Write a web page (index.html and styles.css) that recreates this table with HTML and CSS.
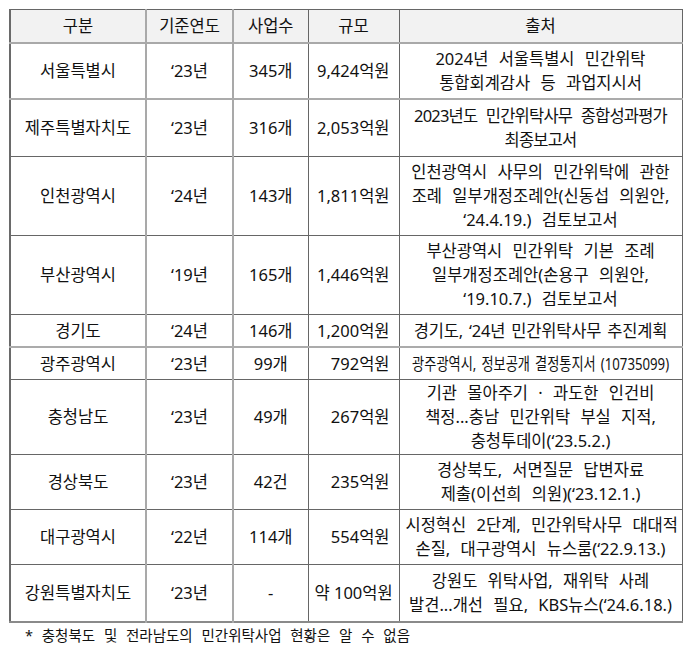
FILE: index.html
```html
<!DOCTYPE html>
<html lang="ko">
<head>
<meta charset="utf-8">
<title>지자체 민간위탁 현황</title>
<link rel="stylesheet" href="styles.css">
</head>
<body>
<div class="page">
  <table class="stats">
    <colgroup>
      <col class="c-name"><col class="c-year"><col class="c-count"><col class="c-size"><col class="c-src">
    </colgroup>
    <thead>
      <tr class="r-head">
        <th>구분</th><th class="v-light">기준연도</th><th>사업수</th><th>규모</th><th>출처</th>
      </tr>
    </thead>
    <tbody>
      <tr class="r-2 h-light">
        <td>서울특별시</td><td class="v-light">‘23년</td><td>345개</td><td class="num">9,424억원</td>
        <td class="src">2024년 서울특별시 민간위탁<br>통합회계감사 등 과업지시서</td>
      </tr>
      <tr class="r-2b">
        <td>제주특별자치도</td><td class="v-light">‘23년</td><td>316개</td><td class="num">2,053억원</td>
        <td class="src tight">2023년도 민간위탁사무 종합성과평가<br>최종보고서</td>
      </tr>
      <tr class="r-3">
        <td>인천광역시</td><td class="v-light">‘24년</td><td>143개</td><td class="num">1,811억원</td>
        <td class="src">인천광역시 사무의 민간위탁에 관한<br>조례 일부개정조례안(신동섭 의원안,<br>‘24.4.19.) 검토보고서</td>
      </tr>
      <tr class="r-3">
        <td>부산광역시</td><td class="v-light">‘19년</td><td>165개</td><td class="num">1,446억원</td>
        <td class="src">부산광역시 민간위탁 기본 조례<br>일부개정조례안(손용구 의원안,<br>‘19.10.7.) 검토보고서</td>
      </tr>
      <tr class="r-1 h-light">
        <td>경기도</td><td class="v-light">‘24년</td><td>146개</td><td class="num">1,200억원</td>
        <td class="src snug">경기도, ‘24년 민간위탁사무 추진계획</td>
      </tr>
      <tr class="r-1">
        <td>광주광역시</td><td class="v-light">‘23년</td><td>99개</td><td class="num">792억원</td>
        <td class="src"><span class="condensed">광주광역시, 정보공개 결정통지서 (10735099)</span></td>
      </tr>
      <tr class="r-3s">
        <td>충청남도</td><td class="v-light">‘23년</td><td>49개</td><td class="num">267억원</td>
        <td class="src">기관 몰아주기 · 과도한 인건비<br>책정...충남 민간위탁 부실 지적,<br>충청투데이(‘23.5.2.)</td>
      </tr>
      <tr class="r-2">
        <td>경상북도</td><td class="v-light">‘23년</td><td>42건</td><td class="num">235억원</td>
        <td class="src">경상북도, 서면질문 답변자료<br>제출(이선희 의원)(‘23.12.1.)</td>
      </tr>
      <tr class="r-2">
        <td>대구광역시</td><td class="v-light">‘22년</td><td>114개</td><td class="num">554억원</td>
        <td class="src">시정혁신 2단계, 민간위탁사무 대대적<br>손질, 대구광역시 뉴스룸(‘22.9.13.)</td>
      </tr>
      <tr class="r-2b last">
        <td>강원특별자치도</td><td class="v-light">‘23년</td><td>-</td><td class="num">약 100억원</td>
        <td class="src">강원도 위탁사업, 재위탁 사례<br>발견...개선 필요, KBS뉴스(‘24.6.18.)</td>
      </tr>
    </tbody>
  </table>
  <p class="note">* 충청북도 및 전라남도의 민간위탁사업 현황은 알 수 없음</p>
</div>
</body>
</html>
```

FILE: styles.css
```css
html, body {
  margin: 0;
  padding: 0;
  background: #ffffff;
}

body {
  font-family: "Noto Sans", "Noto Sans CJK KR", sans-serif;
  color: #111111;
}

.page {
  padding: 9px 0 0 9px;
}

.stats {
  border-collapse: collapse;
  table-layout: fixed;
  width: 672px;
  font-size: 16.5px;
  line-height: 24px;
  border-top: 1px solid #555555;
  border-left: 2px solid #6a6a6a;
  border-right: 1px solid #555555;
  border-bottom: 2px solid #8a8a8a;
}

.c-name { width: 136px; }
.c-year { width: 87px; }
.c-count { width: 75px; }
.c-size { width: 91px; }
.c-src { width: 283px; }

.stats th,
.stats td {
  padding: 0 6px;
  text-align: center;
  vertical-align: middle;
  white-space: nowrap;
  border: 1px solid #666666;
  font-weight: 400;
  letter-spacing: 0;
}

.stats th {
  background: #f2f2f2;
  border-bottom: 2px solid #a9a9a9;
}

.stats td.v-light,
.stats th.v-light {
  border-left: 2px solid #a9a9a9;
  border-right: 2px solid #a9a9a9;
}

.stats tr.h-light td {
  border-bottom: 2px solid #ababab;
}

.stats td.num {
  text-align: right;
  padding-right: 9px;
}

.stats td.src {
  word-spacing: 6px;
}

.stats td.tight {
  word-spacing: 5px;
  letter-spacing: -0.8px;
}

.stats td.snug {
  padding: 0;
  word-spacing: 2px;
  letter-spacing: -0.2px;
}

.condensed {
  display: inline-block;
  transform: scaleX(0.8);
  transform-origin: center;
  word-spacing: 2px;
  margin: 0 -34px;
}

.r-head th { height: 32px; }
.r-1 td { height: 31px; }
.r-2 td { height: 54px; }
.r-2b td { height: 56px; }
.r-3 td { height: 78px; }
.r-3s td { height: 74px; }

.note {
  margin: 0;
  padding: 2px 0 0 16px;
  font-size: 14.5px;
  line-height: 20px;
  word-spacing: 5px;
  color: #111111;
}
```
